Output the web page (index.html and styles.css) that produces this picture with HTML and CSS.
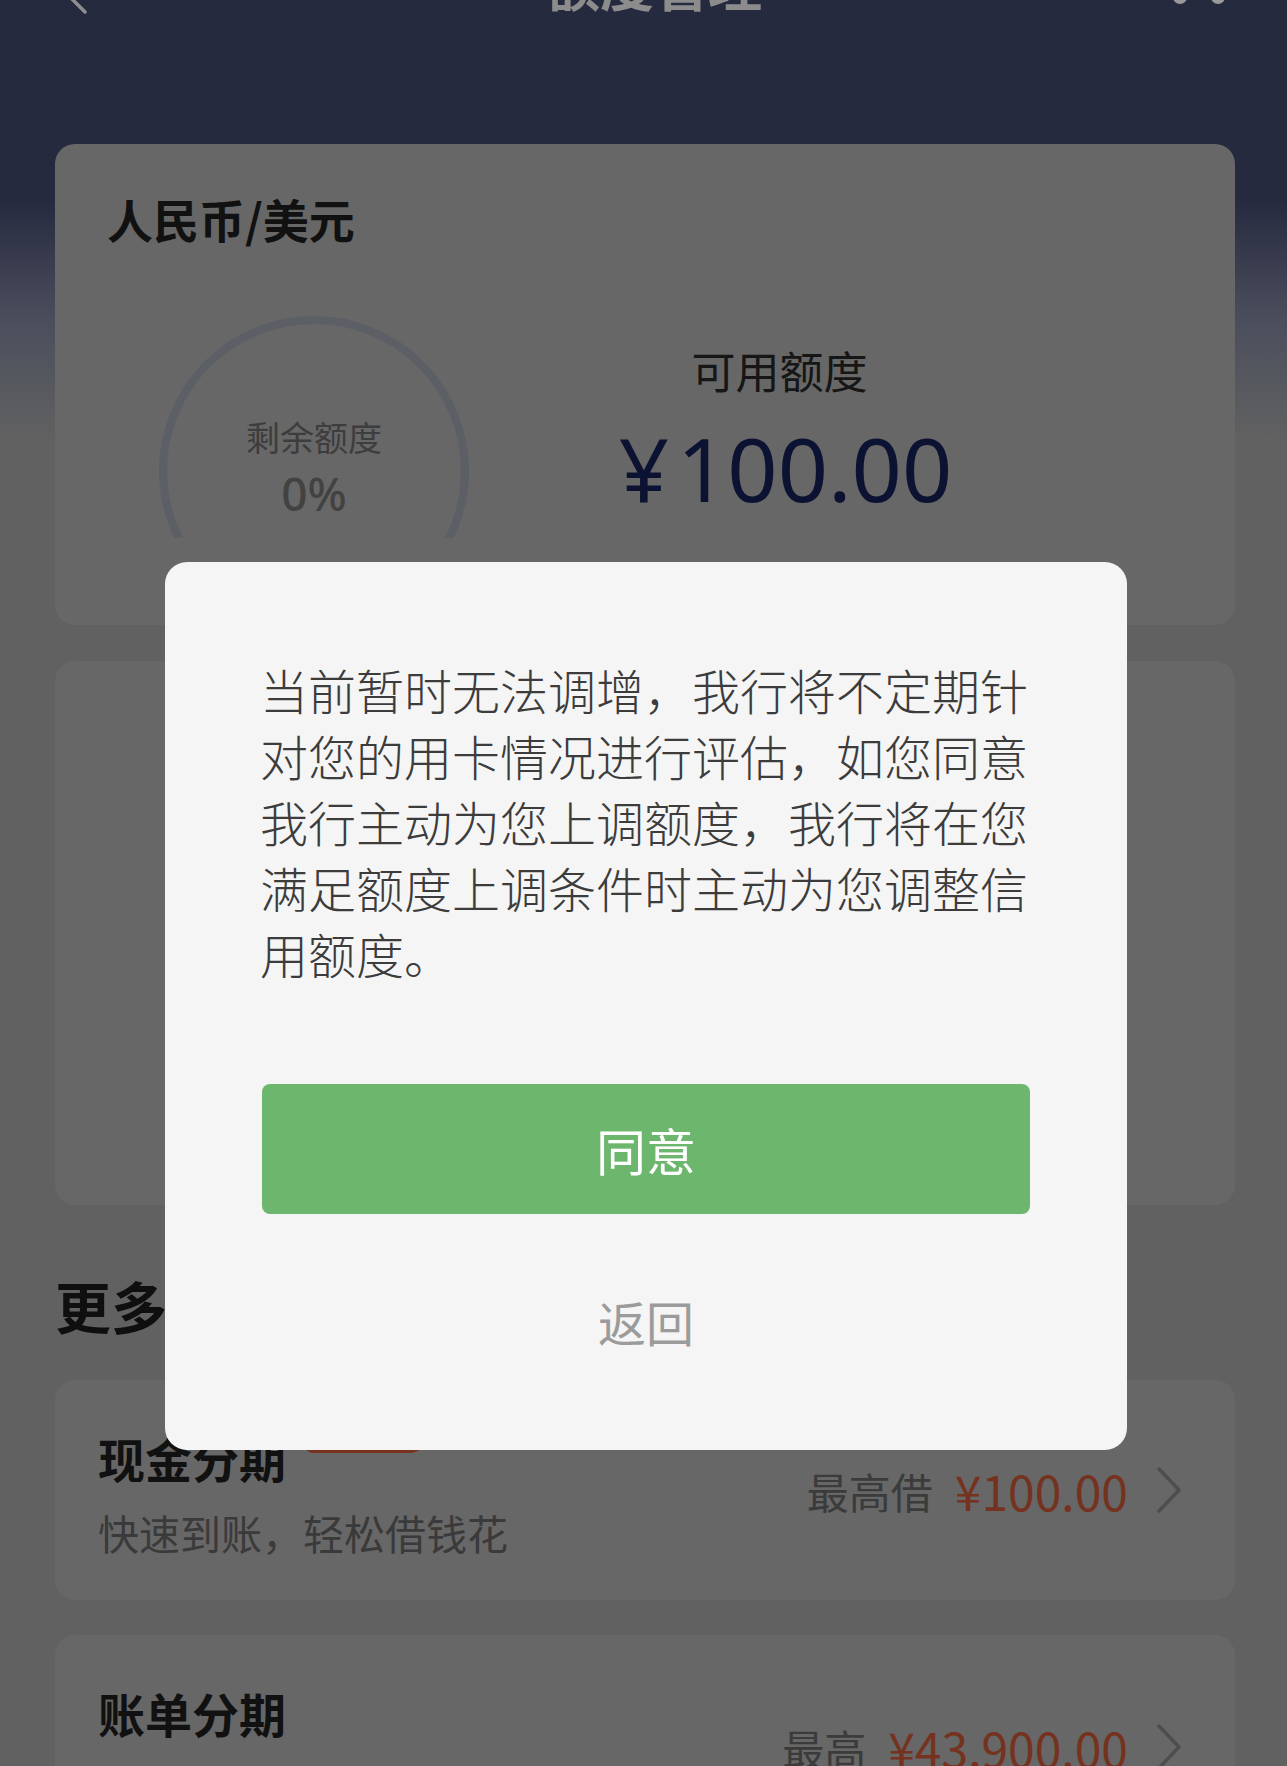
FILE: index.html
```html
<!DOCTYPE html>
<html lang="zh-CN">
<head>
<meta charset="utf-8">
<title>额度管理</title>
<link rel="stylesheet" href="styles.css">
</head>
<body>
<div class="page">
  <header class="nav">
    <svg class="nav-back" width="30" height="64" viewBox="0 0 30 64"><path d="M25 20 L5 40 L25 60" fill="none" stroke="#8e8e8e" stroke-width="3.5" stroke-linecap="round" stroke-linejoin="round"/></svg>
    <h1 class="nav-title">额度管理</h1>
    <svg class="nav-more" width="70" height="64" viewBox="0 0 70 64"><circle cx="15" cy="45" r="7" fill="#9a9a9a"/><circle cx="53" cy="45" r="7" fill="#9a9a9a"/></svg>
  </header>

  <section class="card quota">
    <div class="quota-title">人民币/美元</div>
    <div class="quota-body">
      <div class="gauge">
        <div class="ring">
          <div class="ring-label">剩余额度</div>
          <div class="ring-value">0%</div>
        </div>
      </div>
      <div class="quota-info">
        <div class="quota-label">可用额度</div>
        <div class="amount"><span class="yen">¥</span>100.00</div>
      </div>
    </div>
  </section>

  <section class="card blank"></section>

  <h2 class="more-title">更多服务</h2>

  <section class="card service">
    <div class="service-main">
      <div class="service-head">
        <span class="service-name">现金分期</span>
        <span class="service-tag">优惠</span>
      </div>
      <div class="service-desc">快速到账，轻松借钱花</div>
    </div>
    <div class="service-meta">
      <span class="meta-label">最高借</span>
      <span class="meta-num">¥100.00</span>
      <svg class="chev" width="26" height="46" viewBox="0 0 26 46"><path d="M3 2 L23 23 L3 44" fill="none" stroke="#4e4e4e" stroke-width="3.5" stroke-linecap="round" stroke-linejoin="round"/></svg>
    </div>
  </section>

  <section class="card service">
    <div class="service-main">
      <div class="service-head">
        <span class="service-name">账单分期</span>
      </div>
    </div>
    <div class="service-meta meta-low">
      <span class="meta-label">最高</span>
      <span class="meta-num">¥43,900.00</span>
      <svg class="chev" width="26" height="46" viewBox="0 0 26 46"><path d="M3 2 L23 23 L3 44" fill="none" stroke="#4e4e4e" stroke-width="3.5" stroke-linecap="round" stroke-linejoin="round"/></svg>
    </div>
  </section>

  <div class="dialog">
    <p class="dialog-text">当前暂时无法调增，我行将不定期针对您的用卡情况进行评估，如您同意我行主动为您上调额度，我行将在您满足额度上调条件时主动为您调整信用额度。</p>
    <div class="btn-agree">同意</div>
    <div class="btn-back">返回</div>
  </div>
</div>
</body>
</html>
```

FILE: styles.css
```css
* {
  box-sizing: border-box;
  margin: 0;
  padding: 0;
}

html, body {
  width: 1287px;
  height: 1766px;
  overflow: hidden;
}

body {
  font-family: "Noto Sans CJK SC", "Noto Sans", sans-serif;
  background: #616161;
}

.page {
  position: relative;
  height: 1766px;
  overflow: hidden;
  padding: 0 52px 0 55px;
  background: linear-gradient(#262a3f 0, #262a3f 200px, #4a4e5c 320px, #616161 440px, #616161 100%);
}

.nav {
  height: 100px;
  margin-top: -66px;
  display: grid;
  grid-template-columns: 1fr auto 1fr;
  align-items: center;
}

.nav-back {
  margin-left: 5px;
}

.nav-title {
  margin-left: 18px;
  font-size: 54px;
  line-height: 100px;
  font-weight: 700;
  color: #8c8c8c;
}

.nav-more {
  justify-self: end;
}

.card {
  background: #676767;
  border-radius: 20px;
}

.quota {
  margin-top: 110px;
  height: 481px;
  padding: 42px 52px 0 52px;
}

.quota-title {
  font-size: 46px;
  line-height: 64px;
  font-weight: 700;
  color: #111;
}

.quota-body {
  display: flex;
  margin-top: 66px;
}

.gauge {
  width: 310px;
  height: 222px;
  margin-left: 52px;
  overflow: hidden;
  flex-shrink: 0;
}

.ring {
  width: 310px;
  height: 310px;
  border: 8px solid #5d5f66;
  border-radius: 50%;
  display: flex;
  flex-direction: column;
  align-items: center;
  padding-top: 91px;
}

.ring-label {
  font-size: 34px;
  line-height: 44px;
  color: #3d3d3d;
}

.ring-value {
  margin-top: 6px;
  font-family: "Noto Sans", sans-serif;
  font-size: 46px;
  line-height: 56px;
  font-weight: 500;
  color: #424242;
}

.quota-info {
  flex: 1;
  display: flex;
  flex-direction: column;
  align-items: center;
  padding-right: 81px;
  margin-top: 24px;
}

.quota-label {
  margin-right: 12px;
  font-size: 44px;
  line-height: 60px;
  color: #161616;
}

.amount {
  margin-top: 18px;
  font-family: "Noto Sans", sans-serif;
  font-size: 88px;
  line-height: 100px;
  font-weight: 400;
  color: #0c1231;
}

.yen {
  margin-right: 8px;
}

.blank {
  margin-top: 36px;
  height: 544px;
}

.more-title {
  margin-top: 65px;
  font-size: 56px;
  line-height: 70px;
  font-weight: 700;
  color: #0f0f0f;
}

.service {
  margin-top: 40px;
  height: 220px;
  display: flex;
  justify-content: space-between;
  align-items: center;
  padding: 0 53px 0 43px;
}

.service + .service {
  margin-top: 35px;
}

.service-main {
  align-self: flex-start;
  padding-top: 50px;
}

.service-head {
  display: flex;
  align-items: flex-start;
}

.service-name {
  font-size: 47px;
  line-height: 56px;
  font-weight: 700;
  color: #111;
}

.service-tag {
  margin: -19px 0 0 19px;
  width: 124px;
  height: 42px;
  border-radius: 20px 20px 20px 8px;
  background: #78331f;
  color: #777;
  font-size: 26px;
  line-height: 42px;
  text-align: center;
}

.service-desc {
  margin-top: 21px;
  font-size: 41px;
  line-height: 50px;
  color: #3a3a3a;
}

.service-meta {
  display: flex;
  align-items: center;
}

.meta-low {
  margin-top: 4px;
}

.meta-label {
  font-size: 42px;
  color: #3b3b3b;
}

.meta-num {
  margin-left: 22px;
  font-size: 48px;
  color: #74321f;
}

.chev {
  margin-left: 28px;
}

.dialog {
  position: absolute;
  top: 562px;
  left: 165px;
  width: 962px;
  background: #f5f5f5;
  border-radius: 22px;
  padding: 94px 95px 99px;
}

.dialog-text {
  font-size: 48px;
  line-height: 66px;
  font-weight: 300;
  color: #3c3c3c;
}

.btn-agree {
  margin: 98px 2px 0;
  height: 130px;
  background: #6db66e;
  border-radius: 8px;
  color: #fff;
  font-size: 50px;
  display: flex;
  align-items: center;
  justify-content: center;
}

.btn-back {
  margin-top: 77px;
  font-size: 48px;
  line-height: 60px;
  color: #9b9b9b;
  text-align: center;
}
```
